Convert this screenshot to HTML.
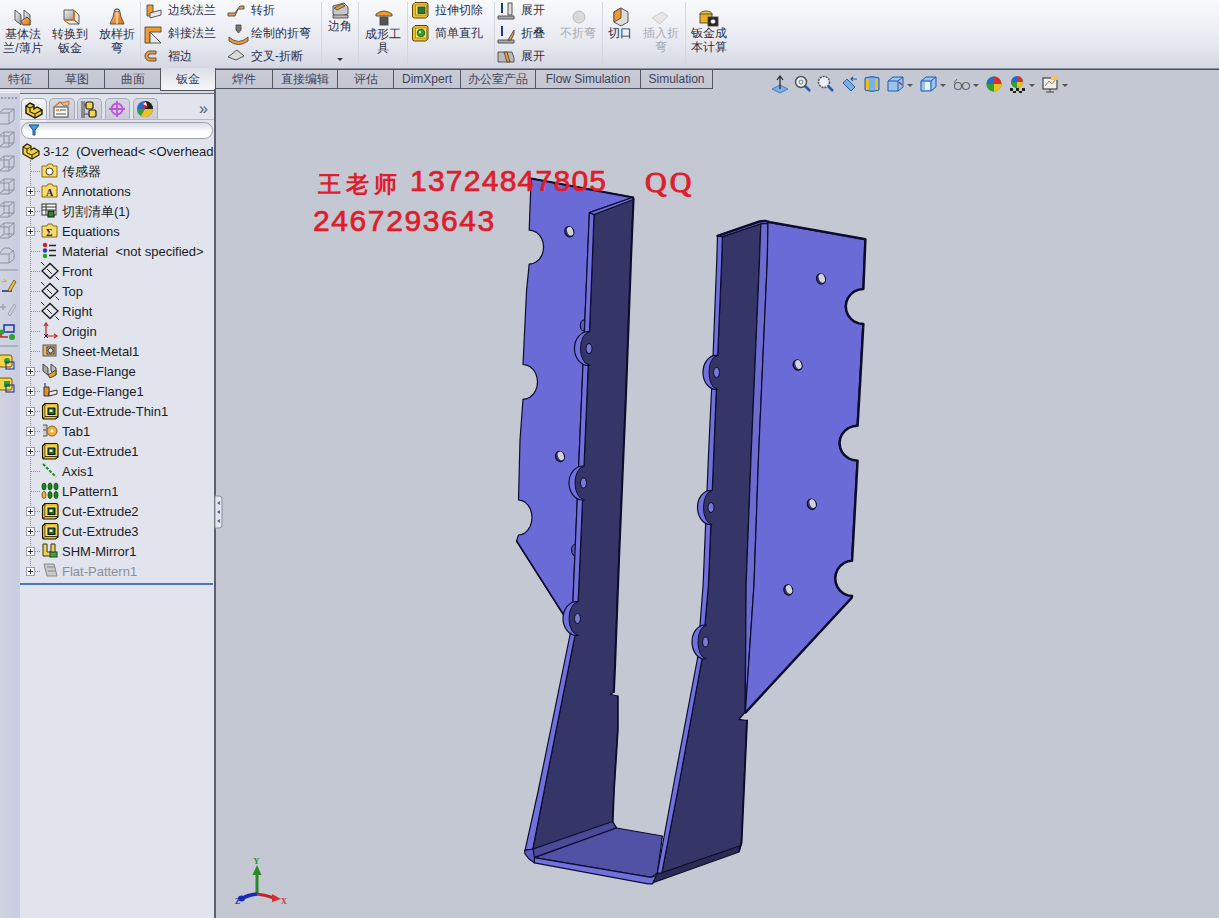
<!DOCTYPE html>
<html><head><meta charset="utf-8">
<style>
*{margin:0;padding:0;box-sizing:border-box}
html,body{width:1219px;height:918px;overflow:hidden;background:#c4c8d3;font-family:"Liberation Sans",sans-serif;}
.abs{position:absolute}
#toolbar{left:0;top:0;width:1219px;height:69px;background:linear-gradient(#f9fafc 0%,#f1f2f7 30%,#e6e8ef 65%,#d4d7e2 100%);}
#tbline{left:0;top:68px;width:1219px;height:2px;background:linear-gradient(#8a8e9a 0%,#8a8e9a 30%,#4a4e5a 30%)}
#tabrow{left:0;top:69px;width:1219px;height:21px;background:#c4c8d3}
.tab{position:absolute;top:69px;height:20px;background:linear-gradient(#c9ccd7,#c3c6d1);border:1px solid #515561;border-top:1px solid #515561;border-bottom:1px solid #515561;font-size:12px;color:#40445a;text-align:center;line-height:18px;white-space:nowrap}
.tab.act{background:linear-gradient(#dcdfe7,#f6f7f9);border-bottom:1px solid #50545f;height:23px;top:68px;border-top:none;line-height:22px}
#lstrip{left:0;top:93px;width:20px;height:825px;background:linear-gradient(90deg,#cfd3e0,#c9cee0)}
#panel{left:20px;top:94px;width:195px;height:824px;background:#e1e4ec}
#vsep{left:214px;top:89px;width:2px;height:829px;background:#5d616d}
#view{left:216px;top:90px;width:1003px;height:828px;background:#c4c8d3}
.tbt{position:absolute;font-size:12px;line-height:14px;color:#2a2e48;text-align:center;white-space:nowrap}
.tbl{position:absolute;font-size:12px;line-height:14px;color:#2a2e48;white-space:nowrap}
.wmd{font-size:30px;line-height:36px;color:#e01c2c;-webkit-text-stroke:0.7px #e01c2c;white-space:nowrap}
.tree{position:absolute;left:62px;font-size:13px;color:#1c1f2a;white-space:nowrap;line-height:19px}
</style></head><body>
<div id="toolbar" class="abs"></div>

<!--TOOLBAR-->
<div class="abs" style="left:140px;top:2px;width:1px;height:62px;background:#d3d6de"></div>
<div class="abs" style="left:321px;top:2px;width:1px;height:62px;background:#d3d6de"></div>
<div class="abs" style="left:358px;top:2px;width:1px;height:62px;background:#d3d6de"></div>
<div class="abs" style="left:407px;top:2px;width:1px;height:62px;background:#d3d6de"></div>
<div class="abs" style="left:494px;top:2px;width:1px;height:62px;background:#d3d6de"></div>
<div class="abs" style="left:602px;top:2px;width:1px;height:62px;background:#d3d6de"></div>
<div class="abs" style="left:685px;top:2px;width:1px;height:62px;background:#d3d6de"></div>
<svg class="abs" style="left:0;top:0" width="760" height="68">
 <!-- base flange -->
 <defs><linearGradient id="gg" x1="0" y1="0" x2="1" y2="1"><stop offset="0" stop-color="#f4f4f4"/><stop offset="1" stop-color="#9a9a9a"/></linearGradient><linearGradient id="og" x1="0" y1="0" x2="1" y2="1"><stop offset="0" stop-color="#fbc070"/><stop offset="1" stop-color="#e07010"/></linearGradient></defs>
 <g stroke="#4a4a4a" stroke-width="0.9">
  <polygon points="15,10 21,15 21,25 15,20" fill="url(#gg)"/><polygon points="24,10 30,15 30,25 24,20" fill="url(#gg)"/>
  <polygon points="21,21 27,17 30,20 30,25 23,25" fill="url(#og)"/>
  <!-- convert -->
  <polygon points="64,10 74,10 74,20 64,20" fill="url(#gg)"/><polygon points="74,10 79,15 79,24 74,20" fill="#e8e8e8"/>
  <polygon points="64,20 74,20 79,24 69,24" fill="#f0f0f0"/><path d="M64,20 H74 V10" fill="none" stroke="#e07010" stroke-width="1.6"/>
  <!-- lofted -->
  <path d="M114.5,10 Q117,8 119.5,10 L121,17 Q123,21 124,24 H110 Q111,21 113,17 Z" fill="url(#og)"/><ellipse cx="117" cy="10.5" rx="2.5" ry="1.5" fill="#ccc"/><path d="M117,12 V24" stroke="#fff" stroke-width="1"/>
  <!-- edge flange -->
  <polygon points="147,5 153,5 153,16 147,16" fill="#f29b2a"/><polygon points="150,13 161,10 161,15 150,18" fill="#e8e8e8"/>
  <!-- miter -->
  <polygon points="145,27 161,27 161,32 150,32 150,43 145,43" fill="#f29b2a"/><polygon points="150,32 161,43 150,43" fill="#e8e8e8"/>
  <!-- hem -->
  <path d="M156,51 L150,51 A5,5 0 0 0 150,61 L156,61 L156,58 L150,58 A2,2 0 0 1 150,54 L156,54 Z" fill="#f29b2a"/>
  <!-- jog -->
  <polygon points="228,13 235,13 240,6 244,6 244,9 238,9 235,16 228,16" fill="#e8a04a"/>
  <!-- sketched bend -->
  <polygon points="236,25 241,25 241,30 238.5,33 236,30" fill="#777"/>
  <path d="M229,37 L233,40 Q238.5,43 244,40 L248,37 L248,41 Q238.5,48 229,41 Z" fill="#f29b2a"/>
  <!-- cross break -->
  <polygon points="228,57 237,50 244,56 236,60" fill="#dadada"/>
  <!-- corner -->
  <polygon points="333,6 344,3 348,7 348,14 337,17 333,14" fill="#c8c8c8"/><polygon points="334,8 342,4 345,6 337,10" fill="#f29b2a"/>
  <polygon points="333,15 348,15 348,18 333,18" fill="#bbb"/>
  <!-- forming tool -->
  <path d="M376,14 Q384,8 392,14 L392,16 L376,16 Z" fill="#f29b2a"/><rect x="380" y="17" width="8" height="8" fill="#555"/>
  <!-- extruded cut -->
  <g transform="translate(411,1)"><path d="M1.5,4 L4,1.5 H15 Q17,1.5 17,3.5 V15 L14.5,17 H3.5 Q1.5,17 1.5,15 Z" fill="#e8c030" stroke="#5a4400" stroke-width="1"/><rect x="4.5" y="4" width="11" height="10" fill="#f8e070" stroke="#8a6a00" stroke-width="0.6"/><rect x="7" y="6" width="7" height="6.5" fill="#2a7a2a" stroke="#333" stroke-width="0.8"/></g>
  <g transform="translate(411,24)"><path d="M1.5,4 L4,1.5 H15 Q17,1.5 17,3.5 V15 L14.5,17 H3.5 Q1.5,17 1.5,15 Z" fill="#e8c030" stroke="#5a4400" stroke-width="1"/><rect x="4.5" y="4" width="11" height="10" fill="#f8e070" stroke="#8a6a00" stroke-width="0.6"/><circle cx="10" cy="9" r="3.8" fill="#30a030" stroke="#1a5a1a" stroke-width="0.8"/><circle cx="9" cy="8" r="1.2" fill="#c8f0c8" stroke="none"/></g>
  <!-- unfold/fold -->
  <polygon points="498,16 514,16 514,19 498,19" fill="#aaa"/><rect x="501" y="3" width="2" height="10" fill="#1a3a8a" stroke="none"/><rect x="508" y="3" width="4" height="12" fill="#ddd"/>
  <polygon points="498,40 514,40 514,43 498,43" fill="#aaa"/><rect x="501" y="26" width="2" height="10" fill="#1a3a8a" stroke="none"/><polygon points="508,40 514,30 514,34 511,40" fill="#f29b2a"/>
  <polygon points="498,52 512,52 514,58 514,62 498,62" fill="#bbb"/><polygon points="504,52 507,52 510,62 507,62" fill="#f29b2a"/>
  <!-- no bends -->
  <circle cx="579" cy="17" r="6" fill="#d9d9d9" stroke="#b8b8b8"/>
  <!-- rip -->
  <polygon points="614,12 621,8 628,12 628,22 621,26 614,22" fill="#dcdcdc"/><polygon points="614,12 621,8 621,18 614,22" fill="#f29b2a"/>
  <!-- insert bends -->
  <polygon points="652,18 662,12 668,16 660,24" fill="#e6e6e6" stroke="#c8c8c8"/>
  <!-- cost -->
  <ellipse cx="706" cy="14" rx="6" ry="3" fill="#f0c030"/><rect x="700" y="14" width="12" height="9" fill="#e8b020"/><rect x="708" y="17" width="10" height="9" fill="#222"/><circle cx="713" cy="21.5" r="2.5" fill="#fff"/>
 </g>
</svg>
<div class="tbt" style="left:3px;top:27px;width:40px">基体法<br>兰/薄片</div>
<div class="tbt" style="left:50px;top:27px;width:40px">转换到<br>钣金</div>
<div class="tbt" style="left:97px;top:27px;width:40px">放样折<br>弯</div>
<div class="tbl" style="left:168px;top:3px">边线法兰</div>
<div class="tbl" style="left:168px;top:26px">斜接法兰</div>
<div class="tbl" style="left:168px;top:49px">褶边</div>
<div class="tbl" style="left:251px;top:3px">转折</div>
<div class="tbl" style="left:251px;top:26px">绘制的折弯</div>
<div class="tbl" style="left:251px;top:49px">交叉-折断</div>
<div class="tbt" style="left:325px;top:19px;width:30px">边角</div>
<div class="abs" style="left:337px;top:58px;width:0;height:0;border-left:3px solid transparent;border-right:3px solid transparent;border-top:3px solid #333"></div>
<div class="tbt" style="left:362px;top:27px;width:42px">成形工<br>具</div>
<div class="tbl" style="left:435px;top:3px">拉伸切除</div>
<div class="tbl" style="left:435px;top:26px">简单直孔</div>
<div class="tbl" style="left:521px;top:3px">展开</div>
<div class="tbl" style="left:521px;top:26px">折叠</div>
<div class="tbl" style="left:521px;top:49px">展开</div>
<div class="tbt" style="left:556px;top:26px;width:44px;color:#a8abb4">不折弯</div>
<div class="tbt" style="left:605px;top:26px;width:30px">切口</div>
<div class="tbt" style="left:640px;top:26px;width:42px;color:#a8abb4">插入折<br>弯</div>
<div class="tbt" style="left:688px;top:26px;width:42px">钣金成<br>本计算</div>
<!--/TOOLBAR-->
<div id="tabrow" class="abs"></div>
<div id="tbline" class="abs"></div>
<div class="abs" style="left:0;top:89px;width:215px;height:5px;background:#d6d9e1"></div><div class="abs" style="left:20px;top:93px;width:195px;height:1px;background:#6a6e7a"></div><div class="abs" style="left:0;top:90px;width:20px;height:1px;background:#f4f5f8"></div><div class="abs" style="left:0;top:92px;width:20px;height:1px;background:#f4f5f8"></div>
<div class="tab" style="left:-9px;width:58px">特征</div>
<div class="tab" style="left:48px;width:57px">草图</div>
<div class="tab" style="left:104px;width:57px">曲面</div>
<div class="tab act" style="left:160px;width:56px">钣金</div>
<div class="tab" style="left:215px;width:58px">焊件</div>
<div class="tab" style="left:272px;width:66px">直接编辑</div>
<div class="tab" style="left:337px;width:57px">评估</div>
<div class="tab" style="left:393px;width:68px">DimXpert</div>
<div class="tab" style="left:460px;width:76px">办公室产品</div>
<div class="tab" style="left:535px;width:106px">Flow Simulation</div>
<div class="tab" style="left:640px;width:73px">Simulation</div>
<div id="lstrip" class="abs"></div>
<div id="panel" class="abs"></div>
<div id="vsep" class="abs"></div>
<!--PANEL-->


<div class="abs" style="left:21px;top:98px;width:26px;height:22px;background:linear-gradient(#f4f5f8,#e2e5ec);border:1px solid #a8acb8;border-bottom:none;border-radius:5px 5px 0 0"></div>
<div class="abs" style="left:49px;top:98px;width:26px;height:21px;background:linear-gradient(#d6d9e2,#c9ccd6);border:1px solid #a8acb8;border-bottom:none;border-radius:5px 5px 0 0"></div>
<div class="abs" style="left:77px;top:98px;width:25px;height:21px;background:linear-gradient(#d6d9e2,#c9ccd6);border:1px solid #a8acb8;border-bottom:none;border-radius:5px 5px 0 0"></div>
<div class="abs" style="left:105px;top:98px;width:25px;height:21px;background:linear-gradient(#d6d9e2,#c9ccd6);border:1px solid #a8acb8;border-bottom:none;border-radius:5px 5px 0 0"></div>
<div class="abs" style="left:133px;top:98px;width:25px;height:21px;background:linear-gradient(#d6d9e2,#c9ccd6);border:1px solid #a8acb8;border-bottom:none;border-radius:5px 5px 0 0"></div>
<div class="abs" style="left:20px;top:119px;width:194px;height:1px;background:#b4b8c4"></div>
<div class="abs" style="left:21px;top:120px;width:26px;height:2px;background:#eceef3"></div>
<svg class="abs" style="left:20px;top:96px" width="194" height="26">
<g transform="translate(5,5)"><polygon points="1,5 5,2 9,4 9,8 12,6 17,9 17,13 10,17 1,12" fill="#f0d040" stroke="#1a1400" stroke-width="1.4"/><path d="M1,5 L5,7 L9,5 M5,7 V11 L10,13 L17,9 M10,13 V17" fill="none" stroke="#1a1400" stroke-width="1.1"/></g>
<rect x="34" y="11" width="14" height="10" fill="#f8f8f8" stroke="#444" stroke-width="1"/><path d="M34,11 L40,6 L44,9" fill="none" stroke="#c08040" stroke-width="1.5"/><path d="M41,7 L49,5 L49,9 L44,10 Z" fill="#f0b070" stroke="#806040" stroke-width="0.6"/><rect x="36" y="13" width="3" height="2" fill="#f0a040"/><path d="M40,14 H46 M36,18 H46" stroke="#555" stroke-width="1"/>
<path d="M62,5 V22 M64,5 V22 M64,9 H67 M64,18 H70" stroke="#444" stroke-width="1" fill="none"/><rect x="66" y="6" width="7" height="7" rx="1.5" fill="#f3d44a" stroke="#222" stroke-width="1.2"/><rect x="69" y="14" width="7" height="7" rx="1.5" fill="#f3d44a" stroke="#222" stroke-width="1.2"/>
<circle cx="97" cy="13" r="5.5" fill="none" stroke="#c050e0" stroke-width="1.8"/><path d="M97,5 V21 M89,13 H105" stroke="#c050e0" stroke-width="1.8"/>
<circle cx="125" cy="13" r="8" fill="#2a6ad0"/><path d="M125,13 L125,5 A8,8 0 0 1 133,13 Z" fill="#202020"/><path d="M117,13 A8,8 0 0 0 133,13 Z" fill="#f0c020"/><path d="M117,13 A8,8 0 0 0 121,20 L125,13 Z" fill="#30a030"/><path d="M125,5 L122,13 L128,11 Z" fill="#e02020"/><path d="M123,8 L126,6 L127,10 Z" fill="#fff"/>
<text x="179" y="17.5" font-size="16" font-family="Liberation Sans" fill="#555a68">&#187;</text>
</svg>
<div class="abs" style="left:21px;top:122px;width:192px;height:17px;border:1px solid #9ea2ae;border-radius:9px;background:linear-gradient(#d8dbe3,#ffffff 60%)"></div>
<svg class="abs" style="left:28px;top:124px" width="12" height="12"><path d="M1,1 H11 L7,6 V11 H5 V6 Z" fill="#3aa0e0" stroke="#1a4a8a" stroke-width="1"/></svg>
<div class="abs" style="left:30px;top:160px;width:1px;height:412px;border-left:1px dotted #8a8e9a"></div>
<svg class="abs" style="left:22px;top:142px" width="18" height="18"><polygon points="1,5 5,2 9,4 9,8 12,6 17,9 17,13 10,17 1,12" fill="#f0d040" stroke="#2a2000" stroke-width="1.2"/><path d="M1,5 L5,7 L9,5 M5,7 V11 L10,13 L17,9 M10,13 V17" fill="none" stroke="#2a2000" stroke-width="1"/></svg>
<div class="tree" style="left:43px;top:142px;color:#1a1d28">3-12&nbsp;&nbsp;(Overhead&lt;&nbsp;&lt;Overhead</div>
<div class="abs" style="left:31px;top:171px;width:9px;height:1px;border-top:1px dotted #8a8e9a"></div>
<svg class="abs" style="left:41px;top:162px" width="18" height="18"><path d="M1,4 L6,4 L7,2 L11,2 L12,4 L16,4 L16,15 L1,15 Z" fill="#f7dc6c" stroke="#8a6a10" stroke-width="1"/><circle cx="8.5" cy="9.5" r="3.5" fill="#fff" stroke="#333" stroke-width="1"/></svg>
<div class="tree" style="left:62px;top:162px;color:#1a1d28">传感器</div>
<div class="abs" style="left:31px;top:191px;width:9px;height:1px;border-top:1px dotted #8a8e9a"></div>
<div class="abs" style="left:26px;top:187px;width:9px;height:9px;border:1px solid #9aa0ae;background:#fff;"></div><div class="abs" style="left:28px;top:191px;width:5px;height:1px;background:#333"></div><div class="abs" style="left:30px;top:189px;width:1px;height:5px;background:#333"></div>
<svg class="abs" style="left:41px;top:182px" width="18" height="18"><path d="M1,4 L6,4 L7,2 L11,2 L12,4 L16,4 L16,15 L1,15 Z" fill="#f7dc6c" stroke="#8a6a10" stroke-width="1"/><text x="5" y="14" font-size="10" font-family="Liberation Serif" font-weight="bold" fill="#1a2a6a">A</text></svg>
<div class="tree" style="left:62px;top:182px;color:#1a1d28">Annotations</div>
<div class="abs" style="left:31px;top:211px;width:9px;height:1px;border-top:1px dotted #8a8e9a"></div>
<div class="abs" style="left:26px;top:207px;width:9px;height:9px;border:1px solid #9aa0ae;background:#fff;"></div><div class="abs" style="left:28px;top:211px;width:5px;height:1px;background:#333"></div><div class="abs" style="left:30px;top:209px;width:1px;height:5px;background:#333"></div>
<svg class="abs" style="left:41px;top:202px" width="18" height="18"><rect x="1" y="2" width="14" height="11" fill="#fff" stroke="#333" stroke-width="1"/><path d="M1,5 H15 M1,8 H15 M5,2 V13" stroke="#333" stroke-width="1"/><rect x="7" y="9" width="6" height="6" fill="#2a8a2a" stroke="#111" stroke-width="1"/></svg>
<div class="tree" style="left:62px;top:202px;color:#1a1d28">切割清单(1)</div>
<div class="abs" style="left:31px;top:231px;width:9px;height:1px;border-top:1px dotted #8a8e9a"></div>
<div class="abs" style="left:26px;top:227px;width:9px;height:9px;border:1px solid #9aa0ae;background:#fff;"></div><div class="abs" style="left:28px;top:231px;width:5px;height:1px;background:#333"></div><div class="abs" style="left:30px;top:229px;width:1px;height:5px;background:#333"></div>
<svg class="abs" style="left:41px;top:222px" width="18" height="18"><path d="M1,4 L6,4 L7,2 L11,2 L12,4 L16,4 L16,15 L1,15 Z" fill="#f7dc6c" stroke="#8a6a10" stroke-width="1"/><text x="5" y="14" font-size="10" font-family="Liberation Serif" font-weight="bold" fill="#1a2a6a">&#931;</text></svg>
<div class="tree" style="left:62px;top:222px;color:#1a1d28">Equations</div>
<div class="abs" style="left:31px;top:251px;width:9px;height:1px;border-top:1px dotted #8a8e9a"></div>
<svg class="abs" style="left:41px;top:242px" width="18" height="18"><circle cx="4" cy="3" r="2.2" fill="#d02020"/><circle cx="4" cy="8.5" r="2.2" fill="#2040c0"/><circle cx="4" cy="14" r="2.2" fill="#20a020"/><path d="M8,3.5 H15 M8,8.5 H15 M8,13.5 H15" stroke="#222" stroke-width="1.6"/></svg>
<div class="tree" style="left:62px;top:242px;color:#1a1d28">Material &nbsp;&lt;not specified&gt;</div>
<div class="abs" style="left:31px;top:271px;width:9px;height:1px;border-top:1px dotted #8a8e9a"></div>
<svg class="abs" style="left:41px;top:262px" width="18" height="18"><path d="M0,0 L3.5,3.5 M14.5,14.5 L18,18" stroke="#222" stroke-width="1"/><polygon points="1,9 9,1.5 17,9 9,16.5" fill="none" stroke="#1a1a1a" stroke-width="1.3"/><path d="M6,7 L11,12" stroke="#222" stroke-width="1"/></svg>
<div class="tree" style="left:62px;top:262px;color:#1a1d28">Front</div>
<div class="abs" style="left:31px;top:291px;width:9px;height:1px;border-top:1px dotted #8a8e9a"></div>
<svg class="abs" style="left:41px;top:282px" width="18" height="18"><path d="M0,0 L3.5,3.5 M14.5,14.5 L18,18" stroke="#222" stroke-width="1"/><polygon points="1,9 9,1.5 17,9 9,16.5" fill="none" stroke="#1a1a1a" stroke-width="1.3"/><path d="M6,7 L11,12" stroke="#222" stroke-width="1"/></svg>
<div class="tree" style="left:62px;top:282px;color:#1a1d28">Top</div>
<div class="abs" style="left:31px;top:311px;width:9px;height:1px;border-top:1px dotted #8a8e9a"></div>
<svg class="abs" style="left:41px;top:302px" width="18" height="18"><path d="M0,0 L3.5,3.5 M14.5,14.5 L18,18" stroke="#222" stroke-width="1"/><polygon points="1,9 9,1.5 17,9 9,16.5" fill="none" stroke="#1a1a1a" stroke-width="1.3"/><path d="M6,7 L11,12" stroke="#222" stroke-width="1"/></svg>
<div class="tree" style="left:62px;top:302px;color:#1a1d28">Right</div>
<div class="abs" style="left:31px;top:331px;width:9px;height:1px;border-top:1px dotted #8a8e9a"></div>
<svg class="abs" style="left:41px;top:322px" width="18" height="18"><path d="M5,2 V14 H15" fill="none" stroke="#c02020" stroke-width="1.2"/><path d="M3,4 L5,1 L7,4 M13,12 L16,14 L13,16" fill="none" stroke="#c02020" stroke-width="1.2"/><path d="M3,12 L7,16 M7,12 L3,16" stroke="#222" stroke-width="1"/></svg>
<div class="tree" style="left:62px;top:322px;color:#1a1d28">Origin</div>
<div class="abs" style="left:31px;top:351px;width:9px;height:1px;border-top:1px dotted #8a8e9a"></div>
<svg class="abs" style="left:41px;top:342px" width="18" height="18"><rect x="2" y="3" width="13" height="11" fill="#f0b060" stroke="#555" stroke-width="1"/><rect x="6" y="5" width="7" height="7" fill="#ddd" stroke="#333" stroke-width="1"/><circle cx="9.5" cy="8.5" r="2.5" fill="none" stroke="#333" stroke-width="1"/></svg>
<div class="tree" style="left:62px;top:342px;color:#1a1d28">Sheet-Metal1</div>
<div class="abs" style="left:31px;top:371px;width:9px;height:1px;border-top:1px dotted #8a8e9a"></div>
<div class="abs" style="left:26px;top:367px;width:9px;height:9px;border:1px solid #9aa0ae;background:#fff;"></div><div class="abs" style="left:28px;top:371px;width:5px;height:1px;background:#333"></div><div class="abs" style="left:30px;top:369px;width:1px;height:5px;background:#333"></div>
<svg class="abs" style="left:41px;top:362px" width="18" height="18"><polygon points="2,2 7,6 7,13 2,9" fill="#aaa" stroke="#444" stroke-width="1"/><polygon points="10,2 15,6 15,13 10,9" fill="#bbb" stroke="#444" stroke-width="1"/><polygon points="7,13 15,8 15,13 9,16" fill="#f0a020" stroke="#444" stroke-width="1"/></svg>
<div class="tree" style="left:62px;top:362px;color:#1a1d28">Base-Flange</div>
<div class="abs" style="left:31px;top:391px;width:9px;height:1px;border-top:1px dotted #8a8e9a"></div>
<div class="abs" style="left:26px;top:387px;width:9px;height:9px;border:1px solid #9aa0ae;background:#fff;"></div><div class="abs" style="left:28px;top:391px;width:5px;height:1px;background:#333"></div><div class="abs" style="left:30px;top:389px;width:1px;height:5px;background:#333"></div>
<svg class="abs" style="left:41px;top:382px" width="18" height="18"><polygon points="3,5 8,5 8,14 3,14" fill="#e8902a" stroke="#333" stroke-width="1"/><polygon points="8,10 16,8 16,12 8,14" fill="#eee" stroke="#333" stroke-width="1"/><path d="M4,1 V5" stroke="#2040a0" stroke-width="1.2"/></svg>
<div class="tree" style="left:62px;top:382px;color:#1a1d28">Edge-Flange1</div>
<div class="abs" style="left:31px;top:411px;width:9px;height:1px;border-top:1px dotted #8a8e9a"></div>
<div class="abs" style="left:26px;top:407px;width:9px;height:9px;border:1px solid #9aa0ae;background:#fff;"></div><div class="abs" style="left:28px;top:411px;width:5px;height:1px;background:#333"></div><div class="abs" style="left:30px;top:409px;width:1px;height:5px;background:#333"></div>
<svg class="abs" style="left:41px;top:402px" width="18" height="18"><path d="M1.5,4 L4,1.5 H15 Q17,1.5 17,3.5 V15 L14.5,17 H3.5 Q1.5,17 1.5,15 Z" fill="#e8c030" stroke="#1a1400" stroke-width="1.1"/><path d="M4,1.5 V14.5 H17 M4,14.5 L1.5,17" fill="none" stroke="#1a1400" stroke-width="0.8"/><rect x="4.5" y="4" width="11" height="10" fill="#f8e070" stroke="none"/><rect x="7" y="6" width="7" height="6.5" fill="#1a6a1a" stroke="#111" stroke-width="1"/><rect x="8.5" y="7.5" width="3" height="2.5" fill="#e8f0e0"/></svg>
<div class="tree" style="left:62px;top:402px;color:#1a1d28">Cut-Extrude-Thin1</div>
<div class="abs" style="left:31px;top:431px;width:9px;height:1px;border-top:1px dotted #8a8e9a"></div>
<div class="abs" style="left:26px;top:427px;width:9px;height:9px;border:1px solid #9aa0ae;background:#fff;"></div><div class="abs" style="left:28px;top:431px;width:5px;height:1px;background:#333"></div><div class="abs" style="left:30px;top:429px;width:1px;height:5px;background:#333"></div>
<svg class="abs" style="left:41px;top:422px" width="18" height="18"><path d="M2,3 H6 V14 H2 M5,8 L2,8" fill="#ccc" stroke="#555" stroke-width="1"/><circle cx="11" cy="9" r="5" fill="#f0b040" stroke="#8a6010" stroke-width="1"/><circle cx="11" cy="9" r="1.5" fill="#fff"/></svg>
<div class="tree" style="left:62px;top:422px;color:#1a1d28">Tab1</div>
<div class="abs" style="left:31px;top:451px;width:9px;height:1px;border-top:1px dotted #8a8e9a"></div>
<div class="abs" style="left:26px;top:447px;width:9px;height:9px;border:1px solid #9aa0ae;background:#fff;"></div><div class="abs" style="left:28px;top:451px;width:5px;height:1px;background:#333"></div><div class="abs" style="left:30px;top:449px;width:1px;height:5px;background:#333"></div>
<svg class="abs" style="left:41px;top:442px" width="18" height="18"><path d="M1.5,4 L4,1.5 H15 Q17,1.5 17,3.5 V15 L14.5,17 H3.5 Q1.5,17 1.5,15 Z" fill="#e8c030" stroke="#1a1400" stroke-width="1.1"/><path d="M4,1.5 V14.5 H17 M4,14.5 L1.5,17" fill="none" stroke="#1a1400" stroke-width="0.8"/><rect x="4.5" y="4" width="11" height="10" fill="#f8e070" stroke="none"/><rect x="7" y="6" width="7" height="6.5" fill="#1a6a1a" stroke="#111" stroke-width="1"/><rect x="8.5" y="7.5" width="3" height="2.5" fill="#e8f0e0"/></svg>
<div class="tree" style="left:62px;top:442px;color:#1a1d28">Cut-Extrude1</div>
<div class="abs" style="left:31px;top:471px;width:9px;height:1px;border-top:1px dotted #8a8e9a"></div>
<svg class="abs" style="left:41px;top:462px" width="18" height="18"><path d="M2,2 L15,15" stroke="#208a20" stroke-width="2" stroke-dasharray="3,1.5"/></svg>
<div class="tree" style="left:62px;top:462px;color:#1a1d28">Axis1</div>
<div class="abs" style="left:31px;top:491px;width:9px;height:1px;border-top:1px dotted #8a8e9a"></div>
<svg class="abs" style="left:41px;top:482px" width="18" height="18"><g fill="#1a8a1a" stroke="#0a3a0a" stroke-width="0.8"><ellipse cx="3" cy="4.5" rx="2" ry="3.5"/><ellipse cx="9" cy="4.5" rx="2" ry="3.5"/><ellipse cx="15" cy="4.5" rx="2" ry="3.5"/><ellipse cx="9" cy="13" rx="2" ry="3.5"/><ellipse cx="15" cy="13" rx="2" ry="3.5"/></g><ellipse cx="3" cy="13" rx="2" ry="3.5" fill="#f0b040" stroke="#6a4a0a" stroke-width="0.8"/></svg>
<div class="tree" style="left:62px;top:482px;color:#1a1d28">LPattern1</div>
<div class="abs" style="left:31px;top:511px;width:9px;height:1px;border-top:1px dotted #8a8e9a"></div>
<div class="abs" style="left:26px;top:507px;width:9px;height:9px;border:1px solid #9aa0ae;background:#fff;"></div><div class="abs" style="left:28px;top:511px;width:5px;height:1px;background:#333"></div><div class="abs" style="left:30px;top:509px;width:1px;height:5px;background:#333"></div>
<svg class="abs" style="left:41px;top:502px" width="18" height="18"><path d="M1.5,4 L4,1.5 H15 Q17,1.5 17,3.5 V15 L14.5,17 H3.5 Q1.5,17 1.5,15 Z" fill="#e8c030" stroke="#1a1400" stroke-width="1.1"/><path d="M4,1.5 V14.5 H17 M4,14.5 L1.5,17" fill="none" stroke="#1a1400" stroke-width="0.8"/><rect x="4.5" y="4" width="11" height="10" fill="#f8e070" stroke="none"/><rect x="7" y="6" width="7" height="6.5" fill="#1a6a1a" stroke="#111" stroke-width="1"/><rect x="8.5" y="7.5" width="3" height="2.5" fill="#e8f0e0"/></svg>
<div class="tree" style="left:62px;top:502px;color:#1a1d28">Cut-Extrude2</div>
<div class="abs" style="left:31px;top:531px;width:9px;height:1px;border-top:1px dotted #8a8e9a"></div>
<div class="abs" style="left:26px;top:527px;width:9px;height:9px;border:1px solid #9aa0ae;background:#fff;"></div><div class="abs" style="left:28px;top:531px;width:5px;height:1px;background:#333"></div><div class="abs" style="left:30px;top:529px;width:1px;height:5px;background:#333"></div>
<svg class="abs" style="left:41px;top:522px" width="18" height="18"><path d="M1.5,4 L4,1.5 H15 Q17,1.5 17,3.5 V15 L14.5,17 H3.5 Q1.5,17 1.5,15 Z" fill="#e8c030" stroke="#1a1400" stroke-width="1.1"/><path d="M4,1.5 V14.5 H17 M4,14.5 L1.5,17" fill="none" stroke="#1a1400" stroke-width="0.8"/><rect x="4.5" y="4" width="11" height="10" fill="#f8e070" stroke="none"/><rect x="7" y="6" width="7" height="6.5" fill="#1a6a1a" stroke="#111" stroke-width="1"/><rect x="8.5" y="7.5" width="3" height="2.5" fill="#e8f0e0"/></svg>
<div class="tree" style="left:62px;top:522px;color:#1a1d28">Cut-Extrude3</div>
<div class="abs" style="left:31px;top:551px;width:9px;height:1px;border-top:1px dotted #8a8e9a"></div>
<div class="abs" style="left:26px;top:547px;width:9px;height:9px;border:1px solid #9aa0ae;background:#fff;"></div><div class="abs" style="left:28px;top:551px;width:5px;height:1px;background:#333"></div><div class="abs" style="left:30px;top:549px;width:1px;height:5px;background:#333"></div>
<svg class="abs" style="left:41px;top:542px" width="18" height="18"><path d="M2,2 H6 V10 H10 V2 H14 V14 H2 Z" fill="#f3d44a" stroke="#333" stroke-width="1"/><rect x="9" y="10" width="7" height="5" fill="#30b030" stroke="#333" stroke-width="1"/></svg>
<div class="tree" style="left:62px;top:542px;color:#1a1d28">SHM-Mirror1</div>
<div class="abs" style="left:31px;top:571px;width:9px;height:1px;border-top:1px dotted #8a8e9a"></div>
<div class="abs" style="left:26px;top:567px;width:9px;height:9px;border:1px solid #9aa0ae;background:#fff;"></div><div class="abs" style="left:28px;top:571px;width:5px;height:1px;background:#333"></div><div class="abs" style="left:30px;top:569px;width:1px;height:5px;background:#333"></div>
<svg class="abs" style="left:41px;top:562px" width="18" height="18"><polygon points="3,2 13,2 16,14 6,14" fill="#c8c8c8" stroke="#888" stroke-width="1"/><path d="M6,5 L14,5 M7,9 L15,9" stroke="#888" stroke-width="1"/></svg>
<div class="tree" style="left:62px;top:562px;color:#8a8e9a">Flat-Pattern1</div>
<div class="abs" style="left:20px;top:583px;width:193px;height:2px;background:#4a78b8"></div>
<!--/PANEL-->
<!--MODEL--><svg class="abs" style="left:0;top:0" width="1219" height="918" viewBox="0 0 1219 918">
<g stroke="#0c0c2c" stroke-width="1.2" stroke-linejoin="round">
<polygon points="531.1,178.5 633.2,197.3 589.4,212.6 587.6,255.0 581.5,400.0 574.9,555.0 572.4,614.0 563.0,614.0 516.5,541.0 518.5,535.0 522.0,534.4 525.2,532.7 528.0,529.9 530.2,526.2 531.5,522.0 532.0,517.5 531.5,513.0 530.2,508.8 528.0,505.1 525.2,502.3 522.0,500.6 518.5,500.0 518.5,500.0 520.0,440.0 523.0,399.3 526.8,398.7 530.2,397.0 533.3,394.2 535.6,390.6 537.0,386.4 537.5,381.9 537.0,377.4 535.6,373.2 533.3,369.6 530.2,366.8 526.8,365.1 523.0,364.5 523.0,364.5 526.6,290.0 529.2,264.1 532.9,263.5 536.4,261.8 539.4,259.1 541.7,255.6 543.1,251.5 543.6,247.1 543.1,242.7 541.7,238.6 539.4,235.1 536.4,232.4 532.9,230.7 529.2,230.1 529.2,230.1" fill="#6b6bd7"/>
<ellipse cx="583.6" cy="325.4" rx="3.2" ry="5.4" fill="#5a5ab8" stroke-width="1.1"/>
<ellipse cx="575" cy="550" rx="3.4" ry="5.5" fill="#5a5ab8" stroke-width="1.1"/>
<polygon points="594.0,214.5 633.4,199.0 630.9,255.0 625.5,400.0 618.9,555.0 614.6,670.0 613.6,692.0 610.5,694.5 617.6,696.0 617.6,730.0 613.8,790.0 612.5,821.5 616.5,828.0 533.1,849.0 544.3,790.0 575.0,635.0 577.6,614.0 580.2,555.0 586.8,400.0 592.5,255.0 594.0,214.5" fill="#353568"/>
<polygon points="589.4,212.6 587.6,255.0 581.5,400.0 574.9,555.0 572.4,614.0 577.6,614.0 580.2,555.0 586.8,400.0 592.5,255.0 594.0,214.5" fill="#7171de"/>
<polygon points="572.4,614.0 577.6,614.0 575.0,635.0 544.3,790.0 532.5,850.4 525.2,849.7 538.4,790.0 570.0,635.0" fill="#7171de"/>
<polygon points="589.4,212.6 633.2,197.3 633.4,199.5 594.0,214.5" fill="#7171de"/>
<path d="M590.5,331.8 L588.5,331.5 A14,17 0 0 0 588.5,365.5 L590.5,365.2" fill="#7171de"/>
<path d="M594.5,332.1 L589.5,332.1 A9,16.4 0 0 0 589.5,364.9 L594.5,364.9 Z" fill="#353568" stroke="none"/>
<path d="M589.5,332.1 A9,16.4 0 0 0 589.5,364.9" fill="none" stroke-width="1"/>
<ellipse cx="589.0" cy="348.5" rx="3" ry="5" fill="#7878d8" stroke-width="1"/>
<path d="M585,466.3 L583,466 A14,17 0 0 0 583,500 L585,499.7" fill="#7171de"/>
<path d="M589,466.6 L584,466.6 A9,16.4 0 0 0 584,499.4 L589,499.4 Z" fill="#353568" stroke="none"/>
<path d="M584,466.6 A9,16.4 0 0 0 584,499.4" fill="none" stroke-width="1"/>
<ellipse cx="583.5" cy="483" rx="3" ry="5" fill="#7878d8" stroke-width="1"/>
<path d="M579,601.8 L577,601.5 A14,17 0 0 0 577,635.5 L579,635.2" fill="#7171de"/>
<path d="M583,602.1 L578,602.1 A9,16.4 0 0 0 578,634.9 L583,634.9 Z" fill="#353568" stroke="none"/>
<path d="M578,602.1 A9,16.4 0 0 0 578,634.9" fill="none" stroke-width="1"/>
<ellipse cx="577.5" cy="618.5" rx="3" ry="5" fill="#7878d8" stroke-width="1"/>
<polygon points="533.1,849.0 612.5,821.5 616.5,828.0 534.4,857.6 528.0,853.0" fill="#4a4a98"/>
<polygon points="534.4,857.6 616.5,828.0 662.4,836.0 657.4,873.0 651.2,877.3" fill="#5151a5"/>
<polygon points="534.4,857.6 651.2,877.3 657.8,875.3 652.5,883.8 648.0,883.8 534.4,862.8" fill="#7171de"/>
<polygon points="524.6,850.4 533.1,849.0 534.4,857.6 534.4,862.8 529.0,859.0 525.0,854.0" fill="#5d5dc0"/>
<polygon points="722.4,236.6 760.8,223.8 759.5,260.0 751.1,455.0 746.1,585.0 745.2,712.0 739.0,719.4 746.8,720.5 741.3,842.5 739.0,850.0 661.8,873.0 661.8,873.0 679.8,780.0 702.0,659.0 708.4,585.0 713.7,455.0 717.0,372.0 721.7,260.0" fill="#353568"/>
<polygon points="661.0,873.0 740.2,845.8 741.3,842.5 739.0,852.0 653.0,882.8 657.4,873.0" fill="#2c2b56"/>
<polygon points="717.5,236.0 716.8,260.0 712.4,372.0 708.5,455.0 703.1,585.0 697.4,659.0 674.5,780.0 657.4,873.0 661.8,873.0 679.8,780.0 702.0,659.0 708.4,585.0 713.7,455.0 717.0,372.0 721.7,260.0 722.4,236.6" fill="#7171de"/>
<path d="M718,355.7 L716,355.4 A13,17 0 0 0 716,389.4 L718,389.09999999999997" fill="#7171de"/>
<path d="M722,356.0 L717,356.0 A8,16.4 0 0 0 717,388.79999999999995 L722,388.79999999999995 Z" fill="#353568" stroke="none"/>
<path d="M717,356.0 A8,16.4 0 0 0 717,388.79999999999995" fill="none" stroke-width="1"/>
<ellipse cx="716.5" cy="372.4" rx="3" ry="5" fill="#7878d8" stroke-width="1"/>
<path d="M712.5,490.8 L710.5,490.5 A13,17 0 0 0 710.5,524.5 L712.5,524.2" fill="#7171de"/>
<path d="M716.5,491.1 L711.5,491.1 A8,16.4 0 0 0 711.5,523.9 L716.5,523.9 Z" fill="#353568" stroke="none"/>
<path d="M711.5,491.1 A8,16.4 0 0 0 711.5,523.9" fill="none" stroke-width="1"/>
<ellipse cx="711.0" cy="507.5" rx="3" ry="5" fill="#7878d8" stroke-width="1"/>
<path d="M707,625.3 L705,625 A13,17 0 0 0 705,659 L707,658.7" fill="#7171de"/>
<path d="M711,625.6 L706,625.6 A8,16.4 0 0 0 706,658.4 L711,658.4 Z" fill="#353568" stroke="none"/>
<path d="M706,625.6 A8,16.4 0 0 0 706,658.4" fill="none" stroke-width="1"/>
<ellipse cx="705.5" cy="642" rx="3" ry="5" fill="#7878d8" stroke-width="1"/>
<polygon points="717.5,235.9 759.5,221.5 765.0,220.8 770.0,222.1 768.0,223.5 760.8,223.8 722.4,236.6" fill="#7171de"/>
<polygon points="760.8,223.8 768.0,223.5 767.3,260.0 758.6,455.0 754.0,585.0 745.4,712.0 745.2,712.0 746.1,585.0 751.1,455.0 759.5,260.0" fill="#6c6cd0"/>
<polygon points="768.0,222.5 864.9,239.3 862.8,289.0 862.8,289.0 858.2,289.6 854.0,291.3 850.4,294.1 847.6,297.8 845.8,302.0 845.2,306.5 845.8,311.0 847.6,315.2 850.4,318.9 854.0,321.7 858.2,323.4 862.8,324.0 859.7,380.0 857.0,425.7 857.0,425.7 852.3,426.3 848.0,428.0 844.3,430.8 841.4,434.4 839.6,438.6 839.0,443.1 839.6,447.7 841.4,451.9 844.3,455.5 848.0,458.3 852.3,460.0 857.0,460.6 851.5,560.8 851.5,560.8 847.2,561.4 843.1,563.2 839.6,566.0 837.0,569.6 835.3,573.8 834.7,578.4 835.3,583.0 837.0,587.2 839.6,590.8 843.1,593.6 847.2,595.4 851.5,596.0 851.0,598.0 745.4,712.5 754.0,585.0 758.6,455.0 767.3,260.0" fill="#6b6bd7"/>
<polyline points="531.1,178.6 633.2,197.4 633.6,199.0 631.2,255.0 625.8,400.0 619.2,555.0 614.9,670.0 613.9,692.0" fill="none" stroke="#0c0c2c" stroke-width="2.0" stroke-linejoin="round" stroke-linecap="round"/>
<polyline points="617.9,696.0 617.9,730.0 614.1,790.0 612.8,821.5" fill="none" stroke="#0c0c2c" stroke-width="1.6" stroke-linejoin="round" stroke-linecap="round"/>
<polyline points="717.5,235.9 759.5,221.5 765.0,220.9 770.0,222.1 865.4,239.3 863.4,289.0 863.4,289.0 858.8,289.6 854.6,291.3 851.0,294.1 848.2,297.8 846.4,302.0 845.8,306.5 846.4,311.0 848.2,315.2 851.0,318.9 854.6,321.7 858.8,323.4 863.4,324.0 860.3,380.0 857.6,425.7 857.6,425.7 852.9,426.3 848.6,428.0 844.9,430.8 842.0,434.4 840.2,438.6 839.6,443.1 840.2,447.7 842.0,451.9 844.9,455.5 848.6,458.3 852.9,460.0 857.6,460.6 852.1,560.8 852.1,560.8 847.8,561.4 843.7,563.2 840.2,566.0 837.6,569.6 835.9,573.8 835.3,578.4 835.9,583.0 837.6,587.2 840.2,590.8 843.7,593.6 847.8,595.4 852.1,596.0 851.6,598.0 745.6,712.5" fill="none" stroke="#0c0c2c" stroke-width="2.4" stroke-linejoin="round" stroke-linecap="round"/>
<polyline points="747.1,720.5 741.6,842.5 739.2,850.5" fill="none" stroke="#0c0c2c" stroke-width="1.8" stroke-linejoin="round" stroke-linecap="round"/>
<polyline points="516.6,541.0 563.0,614.0" fill="none" stroke="#0c0c2c" stroke-width="1.5" stroke-linejoin="round" stroke-linecap="round"/>
<ellipse cx="569.3" cy="231.8" rx="4.4" ry="5.2" fill="#3a3a70" transform="rotate(-20 569.3 231.8)"/>
<ellipse cx="570.3" cy="231.5" rx="2.9" ry="4.5" fill="#d0d2dc" stroke="none" transform="rotate(-20 569.3 231.8)"/>
<ellipse cx="560" cy="456.5" rx="4.4" ry="5.2" fill="#3a3a70" transform="rotate(-20 560 456.5)"/>
<ellipse cx="561" cy="456.2" rx="2.9" ry="4.5" fill="#d0d2dc" stroke="none" transform="rotate(-20 560 456.5)"/>
<ellipse cx="821" cy="278.9" rx="4.4" ry="5.2" fill="#3a3a70" transform="rotate(-20 821 278.9)"/>
<ellipse cx="822" cy="278.59999999999997" rx="2.9" ry="4.5" fill="#d0d2dc" stroke="none" transform="rotate(-20 821 278.9)"/>
<ellipse cx="797.6" cy="365.1" rx="4.4" ry="5.2" fill="#3a3a70" transform="rotate(-20 797.6 365.1)"/>
<ellipse cx="798.6" cy="364.8" rx="2.9" ry="4.5" fill="#d0d2dc" stroke="none" transform="rotate(-20 797.6 365.1)"/>
<ellipse cx="811.8" cy="504.2" rx="4.4" ry="5.2" fill="#3a3a70" transform="rotate(-20 811.8 504.2)"/>
<ellipse cx="812.8" cy="503.9" rx="2.9" ry="4.5" fill="#d0d2dc" stroke="none" transform="rotate(-20 811.8 504.2)"/>
<ellipse cx="788.3" cy="590" rx="4.4" ry="5.2" fill="#3a3a70" transform="rotate(-20 788.3 590)"/>
<ellipse cx="789.3" cy="589.7" rx="2.9" ry="4.5" fill="#d0d2dc" stroke="none" transform="rotate(-20 788.3 590)"/>
</g></svg><!--/MODEL-->
<!--WM-->
<div class="abs" style="left:318px;top:170px;font-family:'Liberation Serif',serif;font-size:23px;letter-spacing:5px;color:#e01c2c;font-weight:bold;white-space:nowrap;line-height:30px">王老师</div>
<div class="abs wmd" style="left:410px;top:163px;letter-spacing:1.25px">13724847805</div>
<div class="abs wmd" style="left:645px;top:164px;letter-spacing:3px;font-size:30px;-webkit-text-stroke:1px #e01c2c;font-family:'Liberation Serif',serif">QQ</div>
<div class="abs wmd" style="left:313px;top:203px;letter-spacing:1.6px">2467293643</div>
<!--/WM-->
<!--EXTRA-->
<svg class="abs" style="left:0;top:90px" width="20" height="320">
<path d="M1,8 H18" stroke="#8a8e9c" stroke-width="1.5" stroke-dasharray="2,1.5"/>
<g fill="none" stroke="#8e929e" stroke-width="1">
<g transform="translate(0,18)"><path d="M-1,5 L4,1 H14 V12 L9,16 H-1 Z M-1,5 H9 V16 M9,5 L14,1"/></g>
<g transform="translate(0,41)"><path d="M-1,5 L4,1 H14 V12 L9,16 H-1 Z M-1,5 H9 V16 M9,5 L14,1 M4,1 V12 H14 M4,12 L-1,16"/></g>
<g transform="translate(0,65)"><path d="M-1,5 L4,1 H14 V12 L9,16 H-1 Z M-1,5 H9 V16 M9,5 L14,1 M4,1 V12 H14 M4,12 L-1,16"/></g>
<g transform="translate(0,88)"><path d="M-1,5 L4,1 H14 V12 L9,16 H-1 Z M-1,5 H9 V16 M9,5 L14,1 M4,1 V12 H14 M4,12 L-1,16"/></g>
<g transform="translate(0,111)"><path d="M-1,5 L4,1 H14 V12 L9,16 H-1 Z M-1,5 H9 V16 M9,5 L14,1 M4,1 V12 H14 M4,12 L-1,16"/></g>
<g transform="translate(0,132)"><path d="M-1,5 L4,1 H14 V12 L9,16 H-1 Z M-1,5 H9 V16 M9,5 L14,1 M4,1 V12 H14 M4,12 L-1,16"/></g>
<g transform="translate(0,156)"><path d="M-1,8 L4,2 L9,2 L14,6 V13 L9,17 H-1 Z M-1,8 H9 L14,4 M9,8 V17"/></g>
</g>
<path d="M0,180 H18" stroke="#8e929e" stroke-width="1"/>
<g transform="translate(0,187)"><path d="M2,14 H12" stroke="#1a2a8a" stroke-width="1.5"/><path d="M8,13 L14,3 L16,5 L10,15 Z" fill="#f0c040" stroke="#6a5010" stroke-width="0.8"/><path d="M4,2 L6,5 M2,5 L7,4" stroke="#f0a020" stroke-width="1"/></g>
<g transform="translate(0,210)"><path d="M0,7 H6 M3,4 V10" stroke="#a0a4b0" stroke-width="1.6"/><path d="M8,14 L14,4 L16,6 L10,16 Z" fill="none" stroke="#a0a4b0" stroke-width="1"/></g>
<g transform="translate(0,234)"><rect x="4" y="1" width="10" height="7" fill="none" stroke="#2040b0" stroke-width="1.6"/><path d="M1,9 V13 H8" stroke="#c02020" stroke-width="1.6" fill="none"/><circle cx="2" cy="8" r="2.5" fill="#30a030"/><circle cx="12" cy="13" r="3" fill="#30a030"/></g>
<path d="M0,256 H18" stroke="#8e929e" stroke-width="1"/>
<g transform="translate(0,264)"><rect x="-1" y="1" width="13" height="12" rx="2" fill="#f3d44a" stroke="#7a5a00" stroke-width="1"/><circle cx="7" cy="7" r="3" fill="#30a030"/><rect x="6" y="8" width="8" height="7" fill="none" stroke="#1a2a8a" stroke-width="1"/></g>
<g transform="translate(0,287)"><rect x="-1" y="1" width="13" height="12" rx="2" fill="#f3d44a" stroke="#7a5a00" stroke-width="1"/><rect x="4" y="4" width="6" height="6" fill="#30a030"/><rect x="6" y="8" width="8" height="7" fill="none" stroke="#1a2a8a" stroke-width="1"/></g>
</svg>

<!-- collapse handle -->
<svg class="abs" style="left:213px;top:495px" width="12" height="34"><path d="M2,1 H6 Q9,1 9,4 V30 Q9,33 6,33 H2 Z" fill="#e4e6ee" stroke="#8c90a0" stroke-width="1"/><path d="M7,6 L4,8 L7,10 Z M7,15 L4,17 L7,19 Z M7,24 L4,26 L7,28 Z" fill="#5a60a0"/></svg>
<!-- triad -->
<svg class="abs" style="left:228px;top:850px" width="66" height="60">
<path d="M29,44 V22" stroke="#2a8a2a" stroke-width="3"/><polygon points="24.5,25 29,15 33.5,25" fill="#2a8a2a"/>
<text x="25.5" y="14" font-size="8" font-family="Liberation Serif" font-weight="bold" fill="#2a8a2a">Y</text>
<path d="M29,44 Q38,45 46,48" stroke="#c02828" stroke-width="3" fill="none"/><polygon points="44,44 53,49 44,52" fill="#d83030"/>
<text x="53" y="54" font-size="8" font-family="Liberation Serif" font-weight="bold" fill="#d03030">X</text>
<path d="M29,44 Q20,45 15,48" stroke="#1a2ab8" stroke-width="3.5" fill="none"/><ellipse cx="13.5" cy="48.5" rx="3.5" ry="3" fill="#1a2ab8"/>
<text x="7" y="54" font-size="8" font-family="Liberation Serif" font-weight="bold" fill="#1a2ab8">Z</text>
</svg>
<!-- view toolbar -->
<svg class="abs" style="left:770px;top:75px" width="300" height="20">
<g transform="translate(2,0)"><polygon points="0,14 8,10 16,14 8,18" fill="#7ab0e8" stroke="#3a6aa8" stroke-width="0.8"/><path d="M8,14 V2" stroke="#222" stroke-width="1.2"/><path d="M5,5 L8,1 L11,5" fill="none" stroke="#222" stroke-width="1.2"/></g>
<g transform="translate(24,0)"><circle cx="7" cy="7" r="5.5" fill="#e8eef8" stroke="#555" stroke-width="1.5"/><path d="M11,11 L16,16" stroke="#2a5aa8" stroke-width="2.5"/><circle cx="7" cy="7" r="2" fill="none" stroke="#777" stroke-width="1"/></g>
<g transform="translate(47,0)"><circle cx="7" cy="7" r="5.5" fill="#e8eef8" stroke="#555" stroke-width="1.5" stroke-dasharray="2,1"/><path d="M11,11 L16,16" stroke="#2a5aa8" stroke-width="2.5"/></g>
<g transform="translate(71,0)"><path d="M2,8 L10,16 L14,12 L6,4 Z" fill="#7ab0e8" stroke="#2a5aa8" stroke-width="1"/><path d="M10,4 H16 M12,2 L10,4 L12,6" fill="none" stroke="#2a5aa8" stroke-width="1.2"/></g>
<g transform="translate(94,0)"><path d="M1,3 Q8,0 15,3 V15 Q8,18 1,15 Z" fill="#7ab0e8" stroke="#2a5aa8" stroke-width="1"/><rect x="2" y="4" width="3" height="11" fill="#e8c020"/><rect x="11" y="4" width="3" height="11" fill="#e8c020"/></g>
<g transform="translate(117,0)"><polygon points="1,6 6,2 16,2 16,12 11,16 1,16" fill="#9ac4f0" stroke="#2a5aa8" stroke-width="1"/><path d="M1,6 H11 V16 M11,6 L16,2" fill="none" stroke="#2a5aa8" stroke-width="1"/><path d="M12,7 L15,10" stroke="#d02020" stroke-width="1.2"/></g>
<polygon points="137,9 143,9 140,12" fill="#555"/>
<g transform="translate(150,0)"><polygon points="1,6 6,2 16,2 16,12 11,16 1,16" fill="#9ac4f0" stroke="#2a5aa8" stroke-width="1"/><path d="M1,6 H11 V16 M11,6 L16,2" fill="none" stroke="#2a5aa8" stroke-width="1"/><rect x="5" y="7" width="5" height="8" fill="#e8f2fc" stroke="none"/></g>
<polygon points="170,9 176,9 173,12" fill="#555"/>
<g transform="translate(183,0)"><circle cx="5" cy="11" r="3.5" fill="none" stroke="#666" stroke-width="1.2"/><circle cx="13" cy="11" r="3.5" fill="none" stroke="#666" stroke-width="1.2"/><path d="M1,8 L4,4 M9,11 Q9,8 9.5,11" stroke="#666" stroke-width="1" fill="none"/></g>
<polygon points="203,9 209,9 206,12" fill="#555"/>
<g transform="translate(216,0)"><circle cx="8" cy="9" r="7.5" fill="#2a8a2a"/><path d="M8,9 L8,1.5 A7.5,7.5 0 0 0 0.5,9 Z" fill="#2a6ad0"/><path d="M8,9 L8,1.5 A7.5,7.5 0 0 1 15.5,9 Z" fill="#d83030"/><path d="M0.5,9 A7.5,7.5 0 0 0 8,16.5 V9 Z" fill="#30a030"/><path d="M15.5,9 A7.5,7.5 0 0 1 8,16.5 V9 Z" fill="#e8c020"/></g>
<g transform="translate(239,0)"><circle cx="8" cy="7" r="6" fill="#2a6ad0"/><path d="M8,7 L8,1 A6,6 0 0 1 14,7 Z" fill="#d83030"/><path d="M2,7 A6,6 0 0 0 8,13 V7 Z" fill="#30a030"/><path d="M14,7 A6,6 0 0 1 8,13 V7 Z" fill="#e8c020"/><path d="M1,13 H4 V16 H1 Z M7,13 H10 V16 H7 Z M13,13 H16 V16 H13 Z M4,16 H7 V18 H4 Z M10,16 H13 V18 H10 Z" fill="#222"/></g>
<polygon points="259,9 265,9 262,12" fill="#555"/>
<g transform="translate(272,0)"><rect x="1" y="3" width="14" height="11" fill="#f0f0f0" stroke="#444" stroke-width="1.2"/><path d="M3,11 L7,6 L10,9 L14,4" stroke="#c08030" stroke-width="1" fill="none"/><path d="M8,14 V17 M4,17 H12" stroke="#444" stroke-width="1"/><rect x="9" y="1" width="7" height="4" fill="#f0c070"/></g>
<polygon points="292,9 298,9 295,12" fill="#555"/>
</svg>
<!--/EXTRA-->
</body></html>
